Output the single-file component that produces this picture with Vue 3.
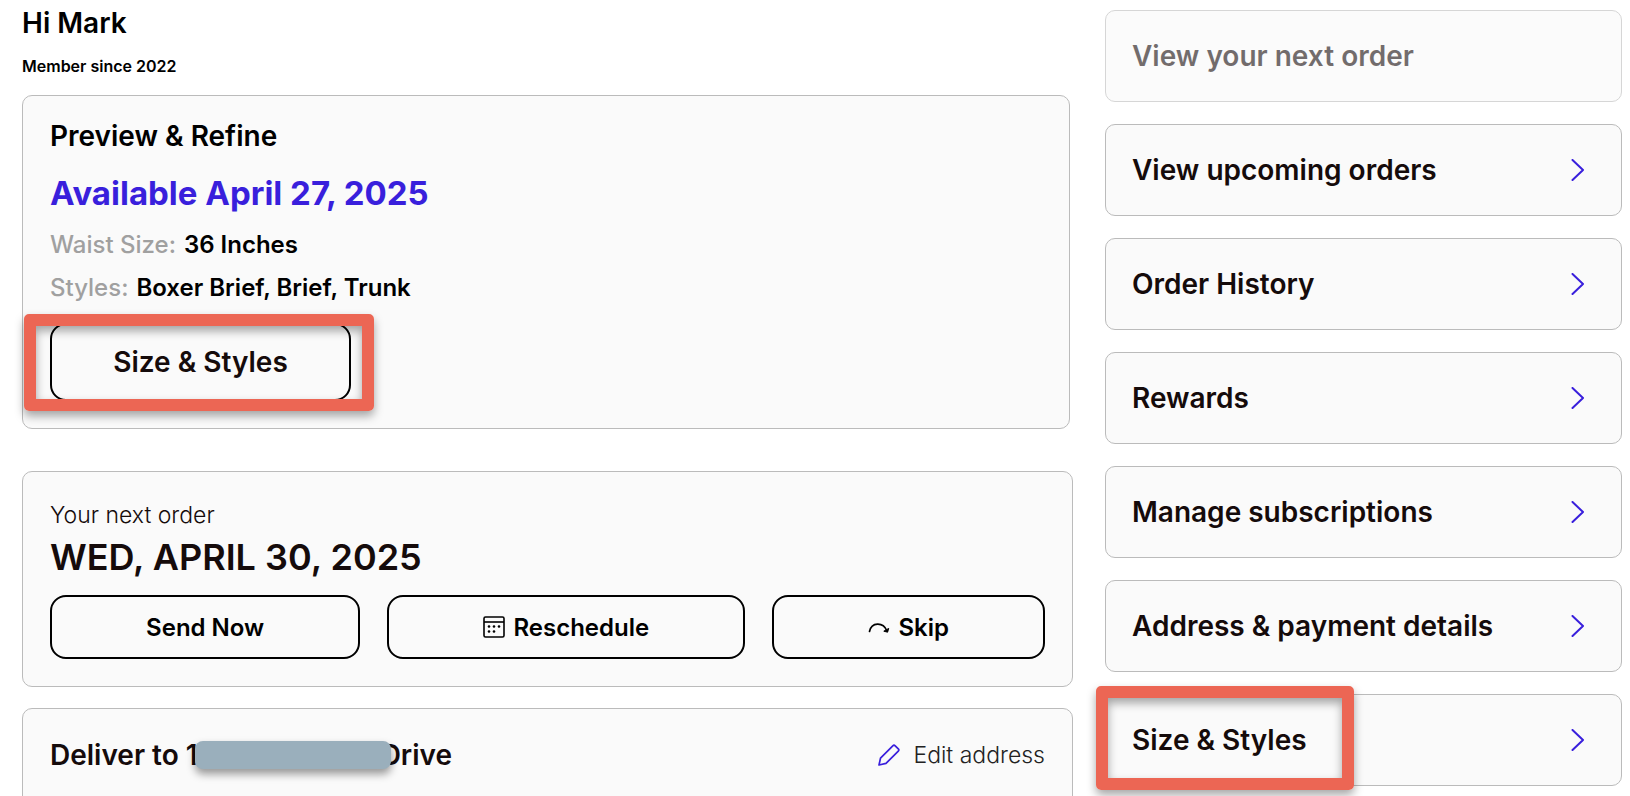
<script setup>
const links = [
  { label: 'View your next order', disabled: true },
  { label: 'View upcoming orders' },
  { label: 'Order History' },
  { label: 'Rewards' },
  { label: 'Manage subscriptions' },
  { label: 'Address & payment details' },
  { label: 'Size & Styles', marked: true },
]
</script>

<template>
  <div class="page">
    <main class="main">
      <header class="greeting">
        <h1>Hi Mark</h1>
        <p>Member since 2022</p>
      </header>

      <section class="card preview">
        <h2 class="title">Preview &amp; Refine</h2>
        <p class="available">Available April 27, 2025</p>
        <dl class="facts">
          <div><dt>Waist Size:</dt><dd>36 Inches</dd></div>
          <div><dt>Styles:</dt><dd>Boxer Brief, Brief, Trunk</dd></div>
        </dl>
        <div class="marked">
          <button type="button" class="outline large">Size &amp; Styles</button>
          <span class="marker marker-button"></span>
        </div>
      </section>

      <section class="card next">
        <p class="eyebrow">Your next order</p>
        <h2 class="date">WED, APRIL 30, 2025</h2>
        <div class="actions">
          <button type="button" class="outline">Send Now</button>
          <button type="button" class="outline">
            <svg class="calendar" width="22" height="22" viewBox="0 0 22 22" aria-hidden="true">
              <rect x="1" y="1" width="20" height="20" rx="1.5" fill="none" stroke="currentColor" stroke-width="1.6" />
              <path d="M1 6h20" stroke="currentColor" stroke-width="1.6" />
              <g fill="currentColor">
                <circle cx="6" cy="10.5" r="1.3" /><circle cx="11" cy="10.5" r="1.3" /><circle cx="16" cy="10.5" r="1.3" />
                <circle cx="6" cy="15.5" r="1.3" /><circle cx="11" cy="15.5" r="1.3" />
              </g>
            </svg>
            Reschedule
          </button>
          <button type="button" class="outline">
            <svg width="22" height="22" viewBox="0 0 22 22" aria-hidden="true">
              <path d="M1.5 15.5C3.5 6 15 5.5 19 15" fill="none" stroke="currentColor" stroke-width="1.7" stroke-linecap="round" />
              <path d="M15.8 15.2L19.6 16.2L20.7 12.4Z" fill="currentColor" stroke="currentColor" stroke-linejoin="round" />
            </svg>
            Skip
          </button>
        </div>
      </section>

      <section class="card deliver">
        <h2 class="title address">Deliver to 1<span class="redacted"></span>Drive</h2>
        <a href="#" class="edit">
          <svg width="22" height="22" viewBox="0 0 22 22" aria-hidden="true">
            <path d="M1 21L2.5 14.2L14.8 1.8Q16 .6 17.2 1.8L20.3 4.9Q21.4 6 20.3 7.2L8 19.4Z" fill="none" stroke="currentColor" stroke-width="1.7" stroke-linejoin="round" />
          </svg>
          <span>Edit address</span>
        </a>
      </section>
    </main>

    <nav class="side" aria-label="Account">
      <a
        v-for="link in links"
        :key="link.label"
        href="#"
        class="card link"
        :class="{ disabled: link.disabled }"
        :aria-disabled="link.disabled"
      >
        <span>{{ link.label }}</span>
        <svg v-if="!link.disabled" width="14" height="22" viewBox="0 0 14 22" aria-hidden="true">
          <path d="M1.5 1L12 11L1.5 21" fill="none" stroke="currentColor" stroke-width="2" stroke-linecap="round" stroke-linejoin="round" />
        </svg>
        <span v-if="link.marked" class="marker marker-link"></span>
      </a>
    </nav>
  </div>
</template>

<style>
html,
body {
  background: #fff;
  overflow: hidden;
}
</style>

<style scoped>
.page {
  display: grid;
  grid-template-columns: 1051fr 517fr;
  gap: 32px;
  height: 100vh;
  overflow: hidden;
  box-sizing: border-box;
  padding: 10px 8px 0 22px;
  font-family: Inter, "Open Sans", sans-serif;
  font-weight: 600;
  color: #000;
}
h1,
h2,
p,
dl,
dd {
  margin: 0;
  font-weight: 600;
}
.card {
  box-sizing: border-box;
  background: #fafafa;
  border: 1px solid #bbb;
  border-radius: 10px;
}
.main {
  display: flex;
  flex-direction: column;
}
.greeting {
  height: 85px;
}
.greeting h1 {
  font-size: 28px;
  line-height: 26px;
}
.greeting p {
  margin-top: 18px;
  font-size: 16px;
  line-height: 24px;
}
.title {
  font-size: 28px;
  line-height: 36px;
}
.preview {
  margin-right: 3px;
  padding: 22px 27px 27px;
}
.available {
  margin-top: 17px;
  font-size: 33px;
  line-height: 44px;
  font-weight: 700;
  color: #391fdc;
}
.facts {
  margin-top: 8px;
  font-size: 24px;
  line-height: 43px;
}
.facts div {
  display: flex;
  gap: 8px;
}
.facts dt {
  font-weight: 500;
  color: #a0a0a0;
}
.outline {
  display: flex;
  flex: 1 1 auto;
  align-items: center;
  justify-content: center;
  gap: 8px;
  height: 64px;
  padding: 0 16px;
  border: 2px solid #000;
  border-radius: 16px;
  background: transparent;
  font: inherit;
  font-size: 24px;
  color: #000;
}
.marked {
  position: relative;
  display: flex;
  width: 301px;
  margin-top: 14px;
}
.large {
  height: 78px;
  font-size: 28px;
  color: #150b0b;
}
.marker {
  position: absolute;
  border: 12px solid #ec6654;
  border-radius: 5px;
  box-shadow: 0 5px 10px rgba(0, 0, 0, 0.35), inset 0 5px 10px rgba(0, 0, 0, 0.35);
  pointer-events: none;
}
.marker-button {
  inset: -9px -23px -10px -26px;
}
.marker-link {
  inset: -9px 267px -5px -10px;
}
.next {
  margin-top: 42px;
  padding: 29px 27px 27px;
  color: #150b0b;
}
.eyebrow {
  font-size: 23px;
  line-height: 28px;
  font-weight: 300;
}
.date {
  margin-top: 6px;
  font-size: 36px;
  line-height: 44px;
}
.actions {
  display: flex;
  gap: 27px;
  margin-top: 16px;
}
.deliver {
  display: flex;
  align-items: flex-start;
  justify-content: space-between;
  margin-top: 21px;
  margin-bottom: -20px;
  padding: 28px 27px 0;
  flex: 1;
  color: #150b0b;
}
.redacted {
  position: relative;
  display: inline-block;
  width: 196px;
  height: 28px;
  margin: 0 -10px 0 -3px;
  vertical-align: -4px;
  border-radius: 8px;
  background: #9aafbc;
  box-shadow: 0 5px 9px rgba(0, 0, 0, 0.4);
}
.edit {
  display: flex;
  align-items: center;
  gap: 13px;
  font-size: 23px;
  line-height: 36px;
  font-weight: 300;
  color: #391fdc;
  text-decoration: none;
}
.edit span {
  color: #222;
}
.side {
  display: flex;
  flex-direction: column;
  gap: 22px;
}
.link {
  position: relative;
  display: flex;
  flex: none;
  align-items: center;
  justify-content: space-between;
  height: 92px;
  padding: 0 36px 0 26px;
  font-size: 28px;
  color: #391fdc;
  text-decoration: none;
}
.link span {
  color: #150b0b;
}
.disabled {
  opacity: 0.6;
}
</style>
